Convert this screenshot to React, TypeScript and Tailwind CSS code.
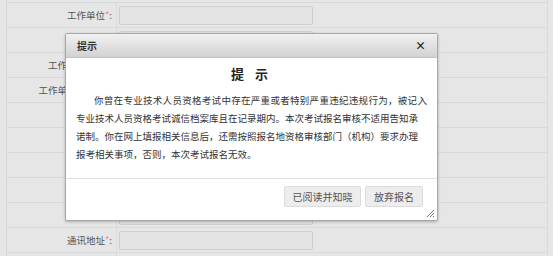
import React from 'react';

const rows = [
  { label: '工作单位' },
  { label: '' },
  { label: '工作岗位名称' },
  { label: '工作单位所在地' },
  { label: '' },
  { label: '' },
  { label: '' },
  { label: '' },
  { label: '' },
  { label: '通讯地址' },
  { label: '' },
];

const lines = [
  '你曾在专业技术人员资格考试中存在严重或者特别严重违纪违规行为，被记入',
  '专业技术人员资格考试诚信档案库且在记录期内。本次考试报名审核不适用告知承',
  '诺制。你在网上填报相关信息后，还需按照报名地资格审核部门（机构）要求办理',
  '报考相关事项，否则，本次考试报名无效。',
];

export default function App() {
  return (
    <div
      className="relative w-[553px] h-[256px] overflow-hidden bg-[#e6e6e6]"
      style={{ fontFamily: '"Noto Sans CJK SC", "Noto Sans", sans-serif' }}
    >
      {/* form behind the mask */}
      <div className="ml-[6px] w-[542px] pt-[2px] border-x border-[#d4dade]">
        <div className="border-t border-[#d4dade]">
          {rows.map((r, i) => (
            <div key={i} className="flex h-[25px] border-b border-[#d4dade]">
              <div className="w-[110px] border-r border-[#d9dde0] flex items-center justify-end pr-[4px] text-[9.5px] text-[#555] whitespace-nowrap">
                {r.label && (
                  <>
                    {r.label}
                    <span className="text-[#e88a8a]">*</span>:
                  </>
                )}
              </div>
              <div className="flex items-center pl-[2px]">
                <div className="w-[194px] h-[19px] rounded-[2px] border border-[#cfcfcf] bg-[#e4e4e4]" />
              </div>
            </div>
          ))}
        </div>
      </div>

      {/* dialog */}
      <div className="absolute left-[65px] top-[33px] w-[373px] h-[188px] border border-[#a8a8a8] rounded-[2px] bg-white shadow-[0_1px_3px_rgba(0,0,0,0.25)] flex flex-col">
        <div className="h-[24px] flex items-center justify-between px-[11px] bg-gradient-to-b from-[#f1f1f1] to-[#d2d2d2] border-b border-[#c4c4c4]">
          <span className="text-[10px] font-bold text-[#333]">提示</span>
          <span className="text-[11px] font-bold text-[#222] leading-none">×</span>
        </div>
        <div className="px-[10px] pt-[7px] pb-[15px] border-b border-[#dedede]">
          <div className="text-center text-[13px] font-bold text-[#222] tracking-[4px] leading-[17px]">提 示</div>
          <div className="mt-[9px] text-[9.5px] leading-[18px] text-[#333]">
            {lines.map((l, i) => (
              <div key={i} className={`whitespace-nowrap ${i === 0 ? 'pl-[18px] tracking-[0.3px]' : ''}`}>
                {l}
              </div>
            ))}
          </div>
        </div>
        <div className="flex-1 relative flex justify-end items-start pt-[7px] pr-[14px] gap-[4px]">
          <button className="h-[21px] w-[77px] bg-[#ededed] border border-[#dcdcdc] rounded-[2px] text-[10px] text-[#555]">
            已阅读并知晓
          </button>
          <button className="h-[21px] w-[58px] bg-[#ededed] border border-[#dcdcdc] rounded-[2px] text-[10px] text-[#555]">
            放弃报名
          </button>
          <svg className="absolute right-[2px] bottom-[2px]" width="9" height="9" viewBox="0 0 9 9">
            <path d="M8 1L1 8M8 4L4 8M8 7L7 8" stroke="#777" strokeWidth="1" />
          </svg>
        </div>
      </div>
    </div>
  );
}
